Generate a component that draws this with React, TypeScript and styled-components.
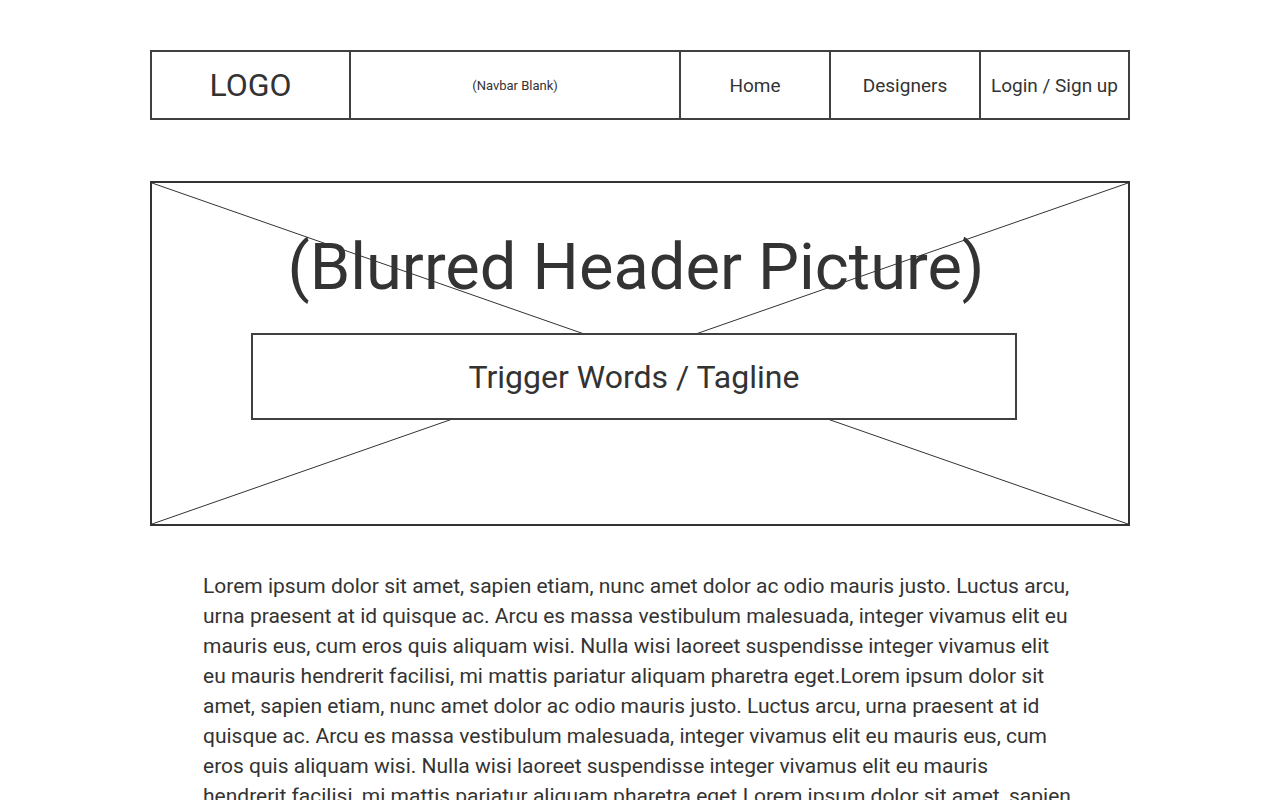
import React from "react";
import styled, { createGlobalStyle } from "styled-components";

const GlobalStyle = createGlobalStyle`
  html, body { margin: 0; padding: 0; background: #ffffff; }
  body { font-family: Roboto, "Liberation Sans", Arial, sans-serif; color: #333333; }
  * { box-sizing: border-box; }
`;

const Page = styled.div`
  width: 980px;
  margin: 50px 0 0 150px;
  display: flex;
  flex-direction: column;
`;

const Navbar = styled.nav`
  display: grid;
  grid-template-columns: 197px 330px 150px 150px 1fr;
  height: 70px;
  border: 2px solid #404040;
`;

const NavCell = styled.div<{ $size: number; $first?: boolean }>`
  display: flex;
  align-items: center;
  justify-content: center;
  border-left: ${(p) => (p.$first ? "none" : "2px solid #404040")};
  font-size: ${(p) => p.$size}px;
  color: #333333;
  white-space: nowrap;
`;

const Hero = styled.section`
  position: relative;
  margin-top: 61px;
  height: 345px;
  border: 2px solid #333333;
  display: flex;
  flex-direction: column;
  padding-top: 52px;
`;

const Cross = styled.svg`
  position: absolute;
  inset: 0;
  width: 100%;
  height: 100%;
`;

const HeroTitle = styled.h1`
  position: relative;
  margin: 0;
  font-weight: 400;
  font-size: 65px;
  line-height: 65px;
  text-align: center;
  padding-right: 8px;
  color: #333333;
`;

const TaglineBox = styled.div`
  position: relative;
  margin: 33px 0 0 99px;
  width: 766px;
  height: 87px;
  border: 2px solid #404040;
  background: #ffffff;
  display: flex;
  align-items: center;
  justify-content: center;
  font-size: 32px;
  color: #333333;
`;

const Body = styled.p`
  margin: 45px 0 0 53px;
  width: 872px;
  font-size: 21px;
  line-height: 30px;
  color: #333333;
`;

const text =
  "Lorem ipsum dolor sit amet, sapien etiam, nunc amet dolor ac odio mauris justo. Luctus arcu, urna praesent at id quisque ac. Arcu es massa vestibulum malesuada, integer vivamus elit eu mauris eus, cum eros quis aliquam wisi. Nulla wisi laoreet suspendisse integer vivamus elit eu mauris hendrerit facilisi, mi mattis pariatur aliquam pharetra eget.Lorem ipsum dolor sit amet, sapien etiam, nunc amet dolor ac odio mauris justo. Luctus arcu, urna praesent at id quisque ac. Arcu es massa vestibulum malesuada, integer vivamus elit eu mauris eus, cum eros quis aliquam wisi. Nulla wisi laoreet suspendisse integer vivamus elit eu mauris hendrerit facilisi, mi mattis pariatur aliquam pharetra eget.Lorem ipsum dolor sit amet, sapien etiam, nunc amet dolor ac odio mauris justo. Luctus arcu, urna praesent at id quisque ac.";

export default function App() {
  return (
    <>
      <GlobalStyle />
      <Page>
        <Navbar>
          <NavCell $size={32} $first>LOGO</NavCell>
          <NavCell $size={13}>(Navbar Blank)</NavCell>
          <NavCell $size={19}>Home</NavCell>
          <NavCell $size={19}>Designers</NavCell>
          <NavCell $size={19}>Login / Sign up</NavCell>
        </Navbar>
        <Hero>
          <Cross viewBox="0 0 100 100" preserveAspectRatio="none">
            <line x1="0" y1="0" x2="100" y2="100" stroke="#333" strokeWidth="1" vectorEffect="non-scaling-stroke" />
            <line x1="100" y1="0" x2="0" y2="100" stroke="#333" strokeWidth="1" vectorEffect="non-scaling-stroke" />
          </Cross>
          <HeroTitle>(Blurred Header Picture)</HeroTitle>
          <TaglineBox>Trigger Words / Tagline</TaglineBox>
        </Hero>
        <Body>{text}</Body>
      </Page>
    </>
  );
}
